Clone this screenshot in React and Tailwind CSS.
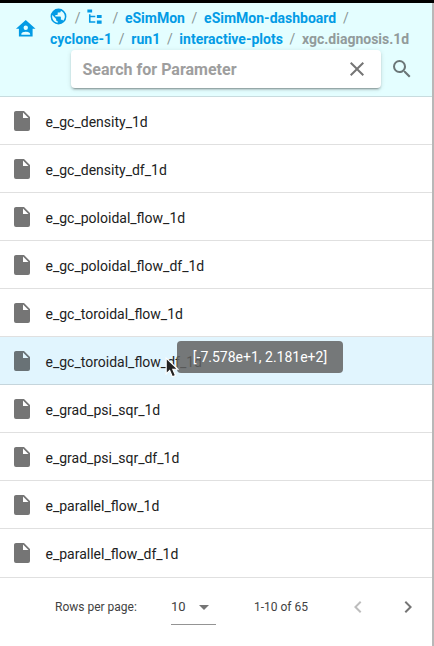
import React from "react";

const rows = [
  "e_gc_density_1d",
  "e_gc_density_df_1d",
  "e_gc_poloidal_flow_1d",
  "e_gc_poloidal_flow_df_1d",
  "e_gc_toroidal_flow_1d",
  "e_gc_toroidal_flow_df_1d",
  "e_grad_psi_sqr_1d",
  "e_grad_psi_sqr_df_1d",
  "e_parallel_flow_1d",
  "e_parallel_flow_df_1d",
];

function Icon({ d, className }) {
  return (
    <svg viewBox="0 0 24 24" fill="currentColor" className={`shrink-0 ${className}`}>
      <path d={d} />
    </svg>
  );
}

const FILE = "M13,9V3.5L18.5,9M6,2C4.89,2 4,2.89 4,4V20A2,2 0 0,0 6,22H18A2,2 0 0,0 20,20V8L14,2H6Z";
const HOME = "M12,3L2,12H5V20H19V12H22L12,3M12,8.75A2.25,2.25 0 0,1 14.25,11A2.25,2.25 0 0,1 12,13.25A2.25,2.25 0 0,1 9.75,11A2.25,2.25 0 0,1 12,8.75M12,15C13.5,15 16.5,15.75 16.5,17.25V18H7.5V17.25C7.5,15.75 10.5,15 12,15Z";
const EARTH = "M17.9,17.39C17.64,16.59 16.89,16 16,16H15V13A1,1 0 0,0 14,12H8V10H10A1,1 0 0,0 11,9V7H13A2,2 0 0,0 15,5V4.59C17.93,5.77 20,8.64 20,12C20,14.08 19.2,15.97 17.9,17.39M11,19.93C7.05,19.44 4,16.08 4,12C4,11.38 4.08,10.78 4.21,10.21L9,15V16A2,2 0 0,0 11,18M12,2A10,10 0 0,0 2,12A10,10 0 0,0 12,22A10,10 0 0,0 22,12A10,10 0 0,0 12,2Z";
const TREE = "M3,3H9V7H3V3M15,10H21V14H15V10M15,17H21V21H15V17M13,13H7V18H13V20H7L5,20V9H7V11H13V13Z";
const MAGNIFY = "M9.5,3A6.5,6.5 0 0,1 16,9.5C16,11.11 15.41,12.59 14.44,13.73L14.71,14H15.5L20.5,19L19,20.5L14,15.5V14.71L13.73,14.44C12.59,15.41 11.11,16 9.5,16A6.5,6.5 0 0,1 3,9.5A6.5,6.5 0 0,1 9.5,3M9.5,5C7,5 5,7 5,9.5C5,12 7,14 9.5,14C12,14 14,12 14,9.5C14,7 12,5 9.5,5Z";
const CLOSE = "M19,6.41L17.59,5L12,10.59L6.41,5L5,6.41L10.59,12L5,17.59L6.41,19L12,13.41L17.59,19L19,17.59L13.41,12L19,6.41Z";
const LEFT = "M15.41,16.58L10.83,12L15.41,7.41L14,6L8,12L14,18L15.41,16.58Z";
const RIGHT = "M8.59,16.58L13.17,12L8.59,7.41L10,6L16,12L10,18L8.59,16.58Z";

function Slash() {
  return <span className="w-[19.2px] shrink-0 text-center font-normal text-[#8b9696]">/</span>;
}

export default function App() {
  return (
    <div className="relative flex h-[646px] w-[434px] flex-col overflow-hidden bg-white font-[Roboto,sans-serif] text-sm text-[#212121]">
      <div className="h-[3px] shrink-0 bg-black" />
      <div className="flex min-h-0 flex-1 flex-col border-r-2 border-[#b8b8b8]">
        <header className="h-[94px] shrink-0 border-b border-[#c8dcdf] bg-[#e4feff]">
          <div className="flex pt-[5px]">
            <Icon d={HOME} className="ml-3.5 mt-[9px] size-[23.5px] text-[#039be5]" />
            <div className="ml-[12.5px] font-bold leading-[21px] text-[#039be5]">
              <div className="flex h-[21px] items-center">
                <Icon d={EARTH} className="-ml-px mb-[5px] size-[19px]" />
                <Slash />
                <Icon d={TREE} className="-ml-0.5 mb-[5px] mr-[1.5px] size-[19px]" />
                <Slash />
                <span>eSimMon</span>
                <Slash />
                <span>eSimMon-dashboard</span>
                <Slash />
              </div>
              <div className="flex h-[21px] items-center">
                <span>cyclone-1</span>
                <Slash />
                <span>run1</span>
                <Slash />
                <span>interactive-plots</span>
                <Slash />
                <span className="text-[#929b9b]">xgc.diagnosis.1d</span>
              </div>
            </div>
          </div>
          <div className="ml-[71px] flex items-center">
            <div className="flex h-[38px] w-[310px] items-center rounded bg-white pl-[11.5px] pr-3 shadow-[0_3px_1px_-2px_rgba(0,0,0,0.2),0_2px_2px_0_rgba(0,0,0,0.14),0_1px_5px_0_rgba(0,0,0,0.12)]">
              <span className="mt-0.5 flex-1 text-base font-bold text-[#9e9e9e]">Search for Parameter</span>
              <Icon d={CLOSE} className="size-6 text-[#757575]" />
            </div>
            <Icon d={MAGNIFY} className="ml-[9px] size-6 text-[#6b7677]" />
          </div>
        </header>
        <main className="shrink-0">
          {rows.map((name, i) => (
            <div
              key={name}
              className={`flex items-center border-b pl-[10px] ${i === rows.length - 1 ? "h-[49px] pb-px" : "h-12"} ${
                i === 5 ? "border-[#c5d5dc] bg-[#e1f5fe] text-[#1e2224]" : "border-[#e0e0e0]"
              }`}
            >
              <Icon d={FILE} className={i === 5 ? "size-6 text-[#697276]" : "size-6 text-[#757575]"} />
              <span className="ml-[11.5px] mt-0.5">{name}</span>
            </div>
          ))}
        </main>
        <footer className="flex h-[58px] shrink-0 items-center text-xs text-[#424242]">
          <span className="ml-[55px] w-[116px]">Rows per page:</span>
          <div className="flex h-[35px] w-[45px] items-center justify-between border-b border-[#949494]">
            <span className="text-[13px]">10</span>
            <svg viewBox="0 0 10 5" className="mr-[7px] mt-0.5 h-[5px] w-[10px] text-[#757575]" fill="currentColor"><path d="M0 0H10L5 5Z" /></svg>
          </div>
          <span className="ml-[38px] w-[92px]">1-10 of 65</span>
          <Icon d={LEFT} className="size-6 text-[#bdbdbd]" />
          <Icon d={RIGHT} className="ml-[26px] size-6 text-[#757575]" />
        </footer>
      </div>
      <div className="absolute left-[177px] top-[341px] flex h-8 w-[166px] items-center justify-center rounded bg-[#616161]/85 text-white">
        [-7.578e+1, 2.181e+2]
      </div>
      <svg viewBox="0 0 12 18" className="absolute left-[165px] top-[357px] h-[21px] w-[14px]">
        <path d="M1 1V14.5L4 11.5L6.3 17L9 15.8L6.7 10.5H11Z" fill="#222" stroke="#fff" strokeWidth="1" />
      </svg>
    </div>
  );
}
